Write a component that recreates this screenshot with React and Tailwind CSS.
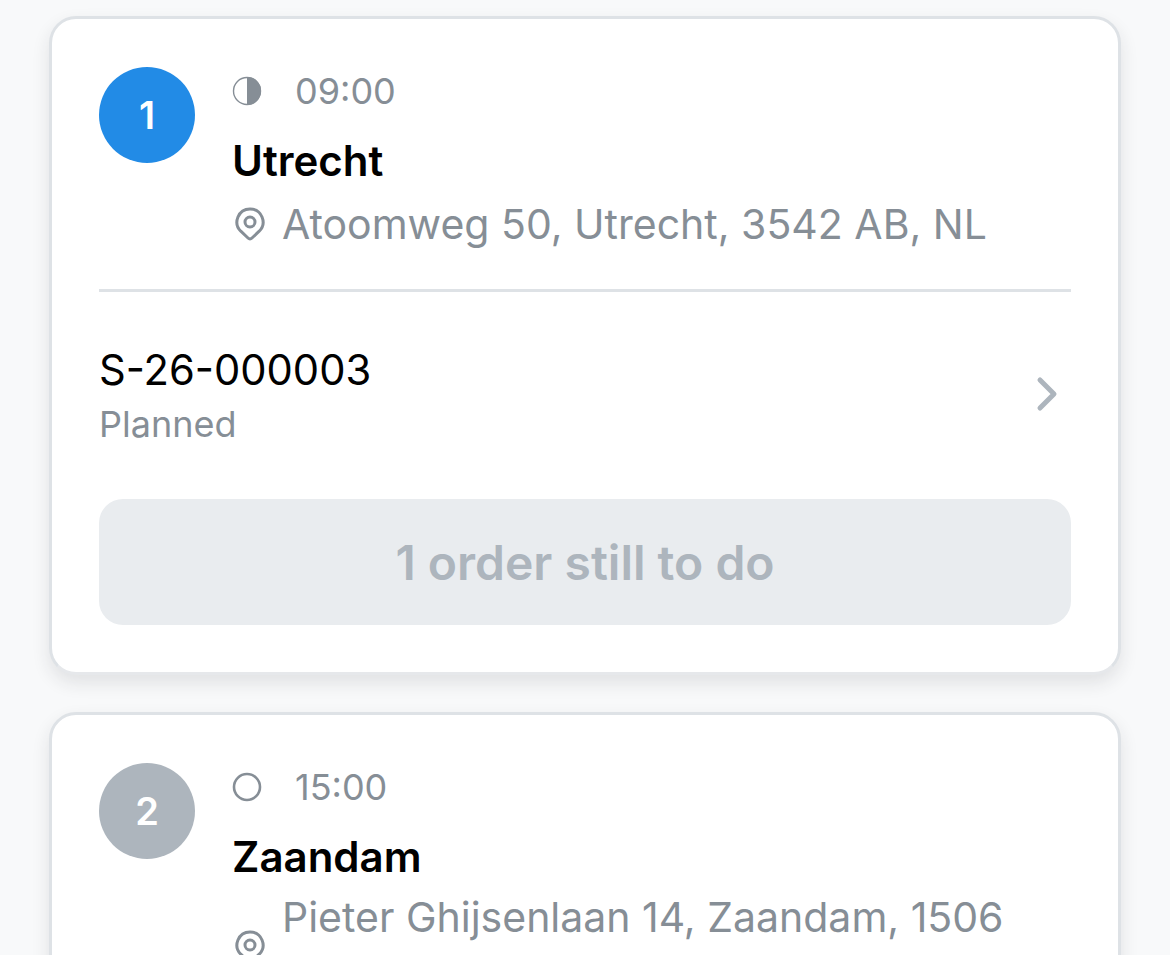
function Pin() {
  return (
    <svg viewBox="0 0 30 34" className="w-[30px] h-[34px] shrink-0 ml-[3px]" fill="none" stroke="#868e96" strokeWidth="3" strokeLinejoin="round">
      <path d="M15 2 A13 13 0 0 1 24.2 24.2 L17 31 Q15 33 13 31 L5.8 24.2 A13 13 0 0 1 15 2 Z" />
      <circle cx="15" cy="15" r="5" />
    </svg>
  );
}

function Head({ n, bg, icon, time, title, children, addressClass }) {
  return (
    <div className="flex gap-[37px]">
      <div className={`w-[96px] h-[96px] rounded-full shrink-0 flex items-center justify-center text-white text-[38px] font-semibold ${bg}`}>{n}</div>
      <div className="flex-1 min-w-0">
        <div className="flex items-center gap-[33px] h-[48px] text-[36px] text-[#868e96]">
          {icon}
          <span>{time}</span>
        </div>
        <div className="mt-[24px] text-[42px] leading-[44px] font-semibold text-black">{title}</div>
        <div className={`flex items-center gap-[17px] text-[41px] text-[#868e96] ${addressClass}`}>
          <Pin />
          <span>{children}</span>
        </div>
      </div>
    </div>
  );
}

export default function App() {
  return (
    <div className="h-[955px] overflow-hidden bg-[#f8f9fa] px-[49px] pt-[16px] flex flex-col gap-[37px] [font-family:Inter,sans-serif]">
      <div className="shrink-0 bg-white border-[3px] border-[#dee2e6] border-b-[#e6e8eb] rounded-[27px] px-[47px] pt-[48px] pb-[47px] shadow-[0_8px_18px_rgba(33,37,41,0.11)]">
        <Head
          n="1"
          bg="bg-[#228be6]"
          time="09:00"
          title="Utrecht"
          addressClass="mt-[15px] leading-[52px]"
          icon={
            <svg viewBox="0 0 30 30" className="w-[30px] h-[30px] shrink-0">
              <circle cx="15" cy="15" r="13.5" fill="none" stroke="#868e96" strokeWidth="1.4" />
              <path d="M15 1 A14 14 0 0 1 15 29 Z" fill="#868e96" />
            </svg>
          }
        >
          Atoomweg 50, Utrecht, 3542 AB, NL
        </Head>
        <div className="mt-[39px] border-t-[3px] border-[#dee2e6]" />
        <div className="mt-[55px] flex items-center justify-between pr-[12px]">
          <div>
            <div className="text-[41.7px] leading-[46px] text-black">S-26-000003</div>
            <div className="mt-[11px] text-[36px] leading-[40px] text-[#868e96]">Planned</div>
          </div>
          <svg viewBox="0 0 24 40" className="w-[24px] h-[40px] -mt-[4px]" fill="none" stroke="#adb5bd" strokeWidth="5" strokeLinecap="round" strokeLinejoin="round">
            <path d="M5 6 L19 20 L5 34" />
          </svg>
        </div>
        <div className="mt-[55px] h-[126px] pt-[1px] rounded-[24px] bg-[#e9ecef] flex items-center justify-center text-[48px] font-semibold text-[#adb5bd]">
          1 order still to do
        </div>
      </div>
      <div className="shrink-0 bg-white border-[3px] border-[#dee2e6] rounded-[27px] px-[47px] pt-[48px] pb-[46px] shadow-[0_8px_18px_rgba(33,37,41,0.11)]">
        <Head
          n="2"
          bg="bg-[#adb5bd]"
          time="15:00"
          title="Zaandam"
          addressClass="mt-[8px] leading-[60px]"
          icon={
            <svg viewBox="0 0 30 30" className="w-[30px] h-[30px] shrink-0">
              <circle cx="15" cy="15" r="13" fill="none" stroke="#868e96" strokeWidth="2.6" />
            </svg>
          }
        >
          Pieter Ghijsenlaan 14, Zaandam, 1506 MN, NL
        </Head>
      </div>
    </div>
  );
}
